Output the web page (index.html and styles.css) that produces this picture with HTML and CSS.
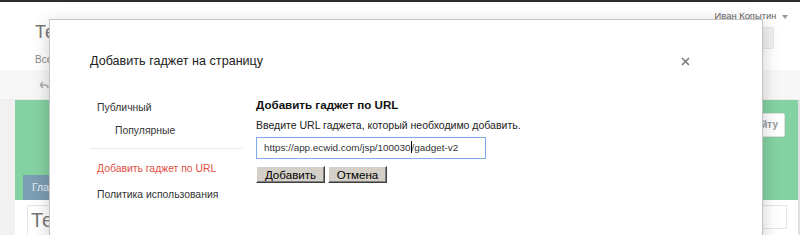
FILE: index.html
```html
<!DOCTYPE html>
<html lang="ru">
<head>
<meta charset="utf-8">
<title>Добавить гаджет</title>
<link rel="stylesheet" href="styles.css">
</head>
<body>
<div class="page">
  <div class="topbar"></div>
  <header class="header">
    <div class="site">
      <div class="site-title">Тестовый сайт</div>
      <div class="site-sub">Все изменения сохранены</div>
    </div>
    <div class="account">
      <div class="user">Иван Копытин <span class="caret-down"></span></div>
      <div class="search"></div>
    </div>
  </header>
  <div class="toolbar">
    <svg class="undo" width="10" height="8" viewBox="0 0 10 8"><path d="M1 4 L4 1 M1 4 L4 7 M1 4 H6 Q9 4 9 7" fill="none" stroke="#aaa" stroke-width="1.4"/></svg>
  </div>
  <div class="content">
    <div class="gutter"></div>
    <div class="main">
      <div class="banner">
        <div class="banner-top">
          <div class="banner-btn">Открыть сайту</div>
        </div>
        <div class="tabs"><div class="tab">Главная</div></div>
      </div>
      <div class="below">
        <div class="page-title-box">Тестовая</div>
        <div class="side-box"></div>
      </div>
    </div>
    <div class="gutter-r"></div>
  </div>
</div>

<div class="modal">
  <div class="modal-head">
    <h1 class="modal-title">Добавить гаджет на страницу</h1>
    <svg class="close" width="9" height="9" viewBox="0 0 9 9"><path d="M1 1 L8 8 M8 1 L1 8" stroke="#7a7a7a" stroke-width="1.6" fill="none"/></svg>
  </div>
  <div class="modal-body">
    <nav class="nav">
      <div class="nav-item">Публичный</div>
      <div class="nav-item sub">Популярные</div>
      <div class="nav-sep"></div>
      <div class="nav-item active">Добавить гаджет по URL</div>
      <div class="nav-item last">Политика использования</div>
    </nav>
    <section class="panel">
      <h2 class="panel-title">Добавить гаджет по URL</h2>
      <p class="panel-desc">Введите URL гаджета, который необходимо добавить.</p>
      <div class="url-input">https://app.ecwid.com/jsp/100030<span class="text-caret"></span>/gadget-v2</div>
      <div class="buttons">
        <button class="btn btn-add">Добавить</button>
        <button class="btn btn-cancel">Отмена</button>
      </div>
    </section>
  </div>
</div>
</body>
</html>
```

FILE: styles.css
```css
* { box-sizing: border-box; }
html, body { margin: 0; padding: 0; }
body {
  width: 800px;
  height: 235px;
  overflow: hidden;
  position: relative;
  font-family: "Liberation Sans", Arial, sans-serif;
  background: #fff;
}
.page { display: flex; flex-direction: column; height: 235px; overflow: hidden; }
.topbar { height: 2px; background: #2d2d2d; flex: none; }
.header {
  height: 68px;
  flex: none;
  display: flex;
  justify-content: space-between;
}
.site { padding: 19px 0 0 35px; white-space: nowrap; }
.site-title { font-size: 18px; color: #777; line-height: 22px; }
.site-sub { font-size: 10px; color: #888; margin-top: 11px; }
.account { display: flex; flex-direction: column; align-items: flex-end; padding: 8px 12px 0 0; }
.user { font-size: 9.4px; color: #666; line-height: 12px; }
.caret-down {
  display: inline-block; width: 0; height: 0;
  border-left: 3px solid transparent; border-right: 3px solid transparent;
  border-top: 4px solid #999; vertical-align: middle; margin-left: 3px;
}
.search {
  width: 40px; height: 22px; margin: 5px 14px 0 0;
  background: #f1f1f1; border: 1px solid #e6e6e6; border-radius: 2px;
}
.toolbar {
  height: 30px; flex: none;
  background: #f7f7f7;
  border-bottom: 1px solid #ececec;
  display: flex; align-items: center; padding-left: 39px;
}
.content { flex: 1; display: flex; background: #f1f1f1; }
.gutter { width: 15px; flex: none; }
.gutter-r { width: 2px; flex: none; background: #e0e0e0; }
.main { flex: 1; display: flex; flex-direction: column; }
.banner { height: 100px; flex: none; background: #84d1a1; display: flex; flex-direction: column; justify-content: space-between; }
.banner-top { display: flex; justify-content: flex-end; padding: 13px 13px 0 0; }
.banner-btn {
  height: 24px; width: 86px; background: #fff; border: 1px solid #e0e0e0; border-radius: 2px;
  font-size: 10px; color: #999; font-weight: bold; line-height: 22px; text-align: right; padding-right: 6px;
  overflow: hidden; white-space: nowrap;
}
.tabs { display: flex; padding-left: 8px; }
.tab {
  height: 25px; background: #7c9db3; color: #e6eef3; font-size: 10.5px; line-height: 25px; padding: 0 9px;
}
.below { flex: 1; background: #fff; display: flex; justify-content: space-between; padding: 5px 11px 0 12px; }
.page-title-box {
  height: 30px; width: 120px; border: 1px solid #e6e6e6; border-bottom: none;
  font-size: 20px; color: #777; line-height: 28px; padding-left: 3px; overflow: hidden;
}
.side-box { width: 26px; height: 24px; border: 1px solid #e6e6e6; }

/* modal */
.modal {
  position: absolute;
  left: 49px; top: 19px;
  width: 714px; height: 240px;
  background: #fff;
  border: 1px solid #c4c4c4;
  box-shadow: 0 4px 16px rgba(0,0,0,0.2);
  padding: 0 0 0 40px;
}
.modal-head {
  display: flex; align-items: center; justify-content: space-between;
  padding: 33px 72px 0 0;
}
.modal-title { margin: 0; font-weight: normal; font-size: 12.6px; line-height: 16px; color: #222; }
.close { display: block; }
.modal-body { display: flex; margin-top: 27px; }
.nav { width: 153px; flex: none; }
.nav-item { font-size: 10.4px; color: #333; line-height: 23px; padding-left: 7px; white-space: nowrap; }
.nav-item.sub { padding-left: 25px; }
.nav-item.active { color: #e0503f; }
.nav-item.last { margin-top: 3px; }
.nav-sep { height: 1px; background: #ebebeb; margin: 6px 0 8px; }
.panel { padding: 1px 0 0 13px; }
.panel-title { margin: 0; font-size: 11.6px; font-weight: bold; color: #111; line-height: 16px; }
.panel-desc { margin: 4px 0 0; font-size: 10.5px; color: #222; line-height: 16px; white-space: nowrap; }
.url-input {
  margin-top: 4px;
  width: 230px; height: 22px;
  border: 1px solid #80aaf0;
  font-size: 9.9px; color: #333; line-height: 20px; padding-left: 7px;
  white-space: nowrap; overflow: hidden;
}
.text-caret { display: inline-block; width: 1px; height: 12px; background: #000; vertical-align: -2px; }
.buttons { display: flex; gap: 3px; margin-top: 7px; }
.btn {
  height: 17px; padding: 0;
  background: #d4d0c8;
  border: 1px solid; border-color: #fff #404040 #404040 #fff;
  box-shadow: inset -1px -1px 0 #808080;
  font-family: "Liberation Sans", Arial, sans-serif;
  font-size: 11.6px; color: #000; line-height: 13px; text-align: center;
}
.btn-add { width: 69px; }
.btn-cancel { width: 59px; }
```
